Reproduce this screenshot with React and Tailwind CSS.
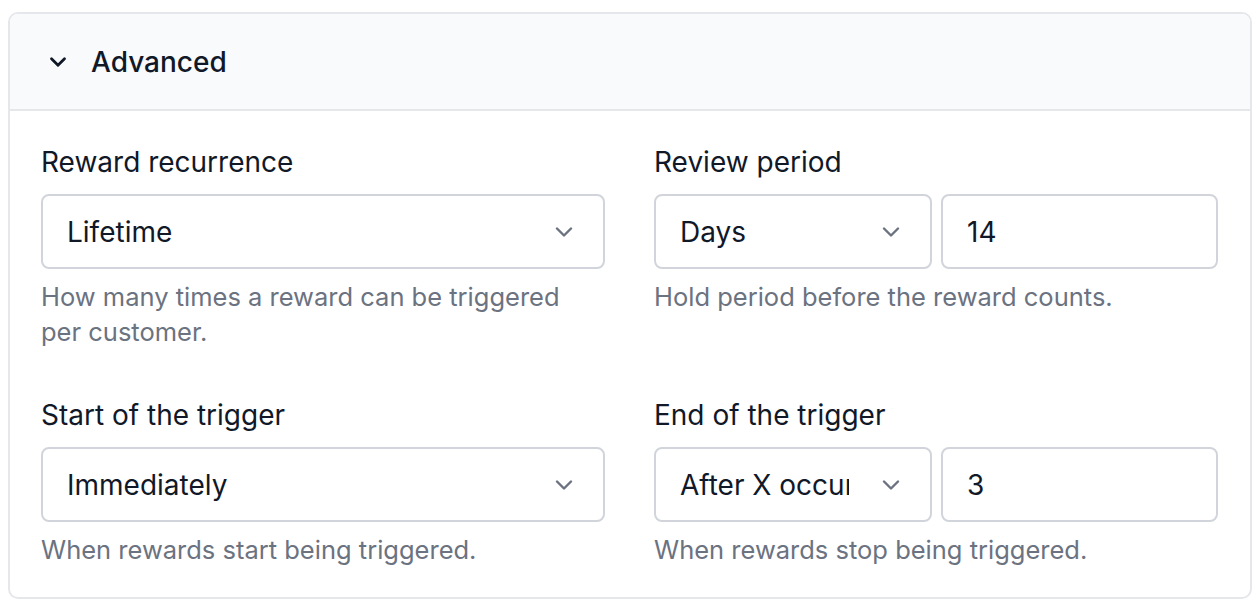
import React from 'react'
import { ChevronDown } from 'lucide-react'

const Select = ({ value, className = '' }) => (
  <div
    className={`flex items-center h-[75px] rounded-[8px] border-2 border-[#d1d5db] bg-white pl-[24px] pr-[25px] ${className}`}
  >
    <span className="flex-1 overflow-hidden whitespace-nowrap mr-[28px] text-[28px] text-[#111827]">{value}</span>
    <ChevronDown size={28} strokeWidth={2.1} className="shrink-0 text-[#6b7280]" />
  </div>
)

const Input = ({ value }) => (
  <div className="flex items-center flex-1 h-[75px] rounded-[8px] border-2 border-[#d1d5db] bg-white px-[24px]">
    <span className="text-[28px] text-[#111827]">{value}</span>
  </div>
)

const Field = ({ label, help, children }) => (
  <div className="flex flex-col">
    <label className="text-[28px] leading-[36px] text-[#111827] mb-[14px]">{label}</label>
    {children}
    <p className="mt-[10px] text-[25.5px] leading-[35px] text-[#6b7280]">{help}</p>
  </div>
)

export default function App() {
  return (
    <div className="bg-white min-h-screen pt-[12px] px-[8px]" style={{ fontFamily: 'Inter, "Noto Sans", sans-serif' }}>
      <div className="rounded-[10px] border-2 border-[#e5e7eb] overflow-hidden w-[1244px]">
        {/* Header */}
        <div className="flex items-center gap-[20px] h-[97px] bg-[#f9fafb] border-b-2 border-[#e5e7eb] pl-[35px]">
          <ChevronDown size={26} strokeWidth={2.6} className="text-[#111827]" />
          <span className="text-[28px] font-medium text-[#111827]">Advanced</span>
        </div>

        {/* Body */}
        <div className="grid grid-cols-2 gap-x-[49px] gap-y-[48px] pl-[31px] pr-[32px] pt-[33px] pb-[30px]">
          <Field label="Reward recurrence" help="How many times a reward can be triggered per customer.">
            <Select value="Lifetime" />
          </Field>
          <Field label="Review period" help="Hold period before the reward counts.">
            <div className="flex gap-[9px]">
              <Select value="Days" className="flex-1 min-w-0" />
              <Input value="14" />
            </div>
          </Field>
          <Field label="Start of the trigger" help="When rewards start being triggered.">
            <Select value="Immediately" />
          </Field>
          <Field label="End of the trigger" help="When rewards stop being triggered.">
            <div className="flex gap-[9px]">
              <Select value="After X occurrences" className="flex-1 min-w-0" />
              <Input value="3" />
            </div>
          </Field>
        </div>
      </div>
    </div>
  )
}
